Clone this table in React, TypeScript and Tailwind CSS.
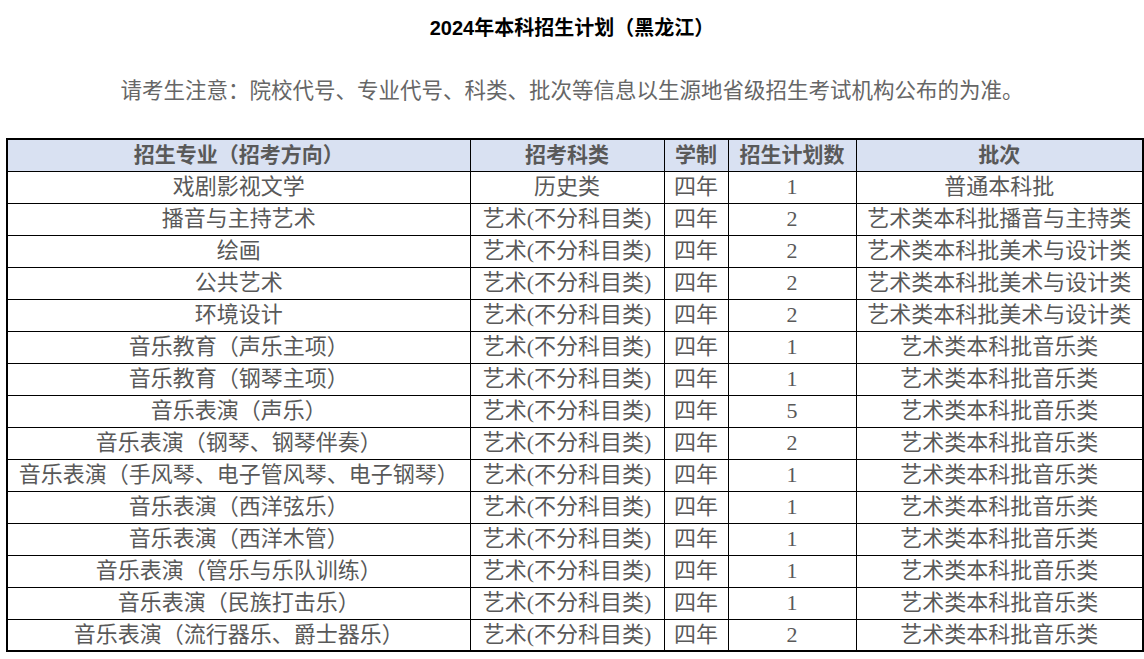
const rows: [string, string, string, string, string][] = [
  ["戏剧影视文学", "历史类", "四年", "1", "普通本科批"],
  ["播音与主持艺术", "艺术(不分科目类)", "四年", "2", "艺术类本科批播音与主持类"],
  ["绘画", "艺术(不分科目类)", "四年", "2", "艺术类本科批美术与设计类"],
  ["公共艺术", "艺术(不分科目类)", "四年", "2", "艺术类本科批美术与设计类"],
  ["环境设计", "艺术(不分科目类)", "四年", "2", "艺术类本科批美术与设计类"],
  ["音乐教育（声乐主项）", "艺术(不分科目类)", "四年", "1", "艺术类本科批音乐类"],
  ["音乐教育（钢琴主项）", "艺术(不分科目类)", "四年", "1", "艺术类本科批音乐类"],
  ["音乐表演（声乐）", "艺术(不分科目类)", "四年", "5", "艺术类本科批音乐类"],
  ["音乐表演（钢琴、钢琴伴奏）", "艺术(不分科目类)", "四年", "2", "艺术类本科批音乐类"],
  ["音乐表演（手风琴、电子管风琴、电子钢琴）", "艺术(不分科目类)", "四年", "1", "艺术类本科批音乐类"],
  ["音乐表演（西洋弦乐）", "艺术(不分科目类)", "四年", "1", "艺术类本科批音乐类"],
  ["音乐表演（西洋木管）", "艺术(不分科目类)", "四年", "1", "艺术类本科批音乐类"],
  ["音乐表演（管乐与乐队训练）", "艺术(不分科目类)", "四年", "1", "艺术类本科批音乐类"],
  ["音乐表演（民族打击乐）", "艺术(不分科目类)", "四年", "1", "艺术类本科批音乐类"],
  ["音乐表演（流行器乐、爵士器乐）", "艺术(不分科目类)", "四年", "2", "艺术类本科批音乐类"],
];

const headers = ["招生专业（招考方向）", "招考科类", "学制", "招生计划数", "批次"];

export default function App() {
  return (
    <div className="w-[1144px] h-[659px] overflow-hidden bg-white font-['Liberation_Sans','Noto_Sans_CJK_SC',sans-serif]">
      <h1 className="pt-[16px] h-[24px] box-content text-center text-[20px] leading-[24px] font-bold text-black">
        2024年本科招生计划（黑龙江）
      </h1>
      <p className="mt-[38px] text-center text-[21.5px] leading-[26px] text-[#666]">
        请考生注意：院校代号、专业代号、科类、批次等信息以生源地省级招生考试机构公布的为准。
      </p>
      <div className="mt-[34px] pl-[6px]">
        <table className="table-fixed border-collapse border-2 border-black w-[1136px]">
          <colgroup>
            <col className="w-[463px]" />
            <col className="w-[194px]" />
            <col className="w-[64px]" />
            <col className="w-[128px]" />
            <col className="w-[287px]" />
          </colgroup>
          <thead>
            <tr className="h-[32px] bg-[#d9e1f2]">
              {headers.map((h) => (
                <th
                  key={h}
                  className="border border-black p-0 text-center text-[21px] leading-[30px] font-bold text-[#595959] whitespace-nowrap"
                >
                  {h}
                </th>
              ))}
            </tr>
          </thead>
          <tbody className="font-['Liberation_Serif','Noto_Sans_CJK_SC',serif]">
            {rows.map((r, i) => (
              <tr key={i} className="h-[32px]">
                {r.map((c, j) => (
                  <td
                    key={j}
                    className="border border-black p-0 text-center text-[22px] leading-[30px] text-[#595959] whitespace-nowrap overflow-hidden"
                  >
                    {c}
                  </td>
                ))}
              </tr>
            ))}
          </tbody>
        </table>
      </div>
    </div>
  );
}
